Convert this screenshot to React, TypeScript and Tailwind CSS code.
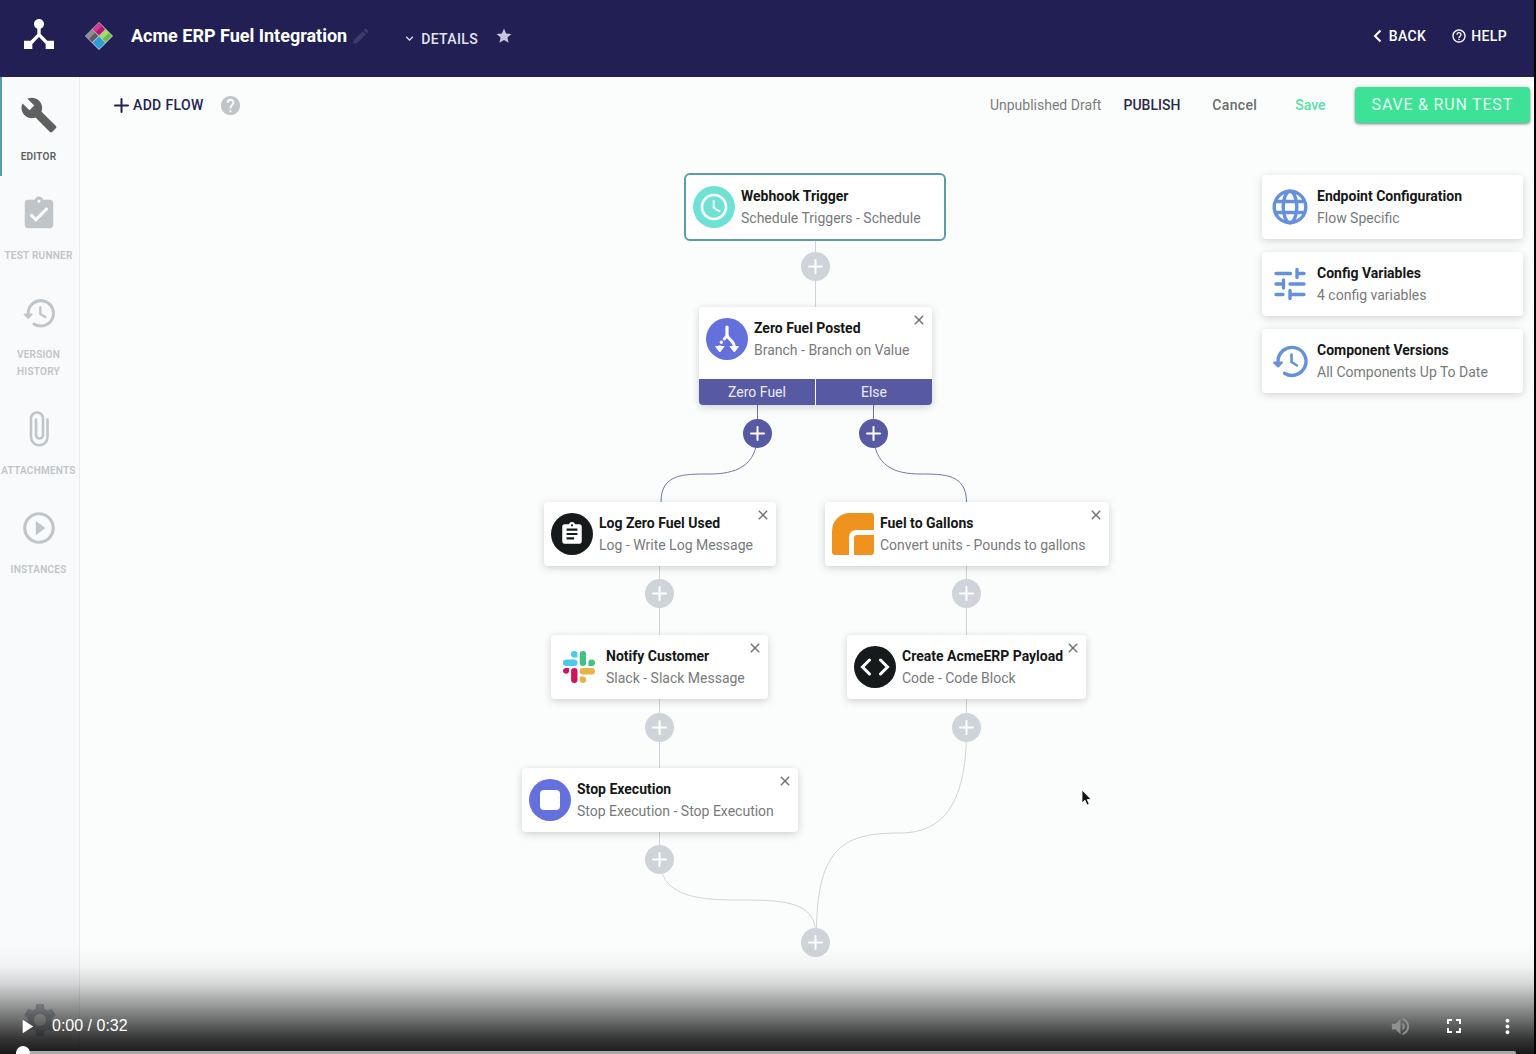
import type { ReactNode } from "react";
import {
  MdAccessTime,
  MdAssignment,
  MdAssignmentTurnedIn,
  MdBuild,
  MdDeviceHub,
  MdEdit,
  MdExpandMore,
  MdFullscreen,
  MdHelp,
  MdHelpOutline,
  MdMoreVert,
  MdPlayArrow,
  MdPlayCircleOutline,
  MdSettings,
  MdStar,
  MdVolumeUp,
} from "react-icons/md";

type Icon = (props: { className?: string }) => ReactNode;

function GlobeIcon({ className }: { className?: string }) {
  return (
    <svg viewBox="0 0 42 42" className={className} fill="none" stroke="currentColor" strokeWidth="3.4" aria-hidden="true">
      <circle cx="21" cy="21" r="15.8" />
      <ellipse cx="21" cy="21" rx="6.8" ry="15.8" />
      <path d="M6 15.500h30M6 26.500h30" />
    </svg>
  );
}

function SlidersIcon({ className }: { className?: string }) {
  return (
    <svg
      viewBox="0 0 42 42"
      className={className}
      fill="none"
      stroke="currentColor"
      strokeWidth="3.4"
      strokeLinecap="round"
      aria-hidden="true"
    >
      <path d="M7 10.500h14.500M28 10.500h7M28 6.500v8M7 21h7M14.500 17v8M21 21h14M7 31.500h7M21 31.500h14M21 27.500v8" />
    </svg>
  );
}

function HistoryIcon({ className }: { className?: string }) {
  return (
    <svg
      viewBox="0 0 42 42"
      className={className}
      fill="none"
      stroke="currentColor"
      strokeWidth="3.4"
      strokeLinecap="round"
      strokeLinejoin="round"
      aria-hidden="true"
    >
      <path d="M9 21.500A14 14 0 1 1 15.500 33.200" />
      <path d="M5 22.500h8L9 26.500z" fill="currentColor" strokeWidth="2" />
      <path d="M22.500 14.500v7.500l5.500 3.500" strokeWidth="2.6" />
    </svg>
  );
}

function ClipIcon({ className }: { className?: string }) {
  return (
    <svg
      viewBox="0 0 38 38"
      className={className}
      fill="none"
      stroke="currentColor"
      strokeWidth="2.600"
      strokeLinecap="round"
      aria-hidden="true"
    >
      <path d="M27.500 9.500V27a8 8 0 0 1-16.500 0V8.500a6 6 0 0 1 12 0V25a3.500 3.500 0 0 1-7 0V9.500" />
    </svg>
  );
}

function PlusIcon({ className }: { className?: string }) {
  return (
    <svg viewBox="0 0 15 15" className={className} stroke="currentColor" strokeWidth="2" strokeLinecap="round" aria-hidden="true">
      <path d="M7.500 1v13M1 7.500h13" />
    </svg>
  );
}

function CrossIcon() {
  return (
    <svg viewBox="0 0 10 10" className="size-[10px]" stroke="currentColor" strokeWidth="1.4" aria-hidden="true">
      <path d="M.8.8l8.400 8.400M9.200.8.8 9.200" />
    </svg>
  );
}

const sideItems: { label: string; icon: Icon; active?: boolean }[] = [
  { label: "Editor", icon: MdBuild, active: true },
  { label: "Test Runner", icon: MdAssignmentTurnedIn },
  { label: "Version History", icon: HistoryIcon },
  { label: "Attachments", icon: ClipIcon },
  { label: "Instances", icon: MdPlayCircleOutline },
];

const configCards: { title: string; detail: string; icon: Icon }[] = [
  { title: "Endpoint Configuration", detail: "Flow Specific", icon: GlobeIcon },
  { title: "Config Variables", detail: "4 config variables", icon: SlidersIcon },
  { title: "Component Versions", detail: "All Components Up To Date", icon: HistoryIcon },
];

// Canvas positions of the "add step" buttons
const addButtons = [
  { place: "left-[721px] top-[119px]", color: "bg-[#ced4d9]" },
  { place: "left-[663px] top-[286px]", color: "bg-[#575aa3]" },
  { place: "left-[779px] top-[286px]", color: "bg-[#575aa3]" },
  { place: "left-[565px] top-[446px]", color: "bg-[#ced4d9]" },
  { place: "left-[872px] top-[446px]", color: "bg-[#ced4d9]" },
  { place: "left-[565px] top-[580px]", color: "bg-[#ced4d9]" },
  { place: "left-[872px] top-[580px]", color: "bg-[#ced4d9]" },
  { place: "left-[565px] top-[712px]", color: "bg-[#ced4d9]" },
  { place: "left-[721px] top-[795px]", color: "bg-[#ced4d9]" },
];

function ProductLogo() {
  return (
    <svg viewBox="0 0 28 28" className="size-7" aria-hidden="true">
      <path d="M14 0 28 14 14 28 0 14z" fill="#cfc9dc" />
      <path d="M14 1 20.200 7.200 14 13.400 7.800 7.200z" fill="#b8156f" />
      <path d="M7.200 7.800 13.400 14 7.200 20.200 1 14z" fill="#5d5c64" />
      <path d="M20.800 7.800 27 14 20.800 20.200 14.600 14z" fill="#6cbd45" />
      <path d="M14 14.600 20.200 20.800 14 27 7.800 20.800z" fill="#2a9fd6" />
      <path d="M14 1 17 4 10.800 10.200 7.800 7.200z" fill="#d03a92" />
      <path d="M20.800 7.800 23.800 10.800 17.600 17 14.600 14z" fill="#a5dc6c" />
      <path d="M7.200 7.800 10.200 10.800 4 17 1 14z" fill="#8e8d94" />
    </svg>
  );
}

function SlackLogo() {
  return (
    <svg viewBox="0 0 32 32" className="size-8" aria-hidden="true">
      <g fill="#4cc8ea">
        <rect x="0" y="8.5" width="14.5" height="6.4" rx="3.2" />
        <path d="M11.3 0a3.2 3.2 0 0 1 3.2 3.2v3.3h-3.2a3.2 3.2 0 0 1 0-6.5z" />
      </g>
      <g fill="#43c083">
        <rect x="16.7" y="0" width="6.4" height="14.9" rx="3.2" />
        <path d="M32 11.7a3.2 3.2 0 0 1-3.2 3.2h-3.4v-3.2a3.3 3.3 0 0 1 6.6 0z" />
      </g>
      <g fill="#e9b346">
        <rect x="16.7" y="17.1" width="15.3" height="6.4" rx="3.2" />
        <path d="M19.9 32a3.2 3.2 0 0 1-3.2-3.2v-3.3h3.2a3.2 3.2 0 0 1 0 6.5z" />
      </g>
      <g fill="#cf1459">
        <rect x="8.1" y="17.1" width="6.4" height="14.9" rx="3.2" />
        <path d="M0 20.3a3.2 3.2 0 0 1 3.2-3.2h2.9v3.2a3.1 3.1 0 0 1-6.1 0z" />
      </g>
    </svg>
  );
}

function UnitsLogo() {
  return (
    <svg viewBox="0 0 42 42" className="size-[42px]" aria-hidden="true" fill="#f0931e">
      <path d="M18 0h21a3 3 0 0 1 3 3v14H24a7 7 0 0 0-7 7v18H3a3 3 0 0 1-3-3V18A18 18 0 0 1 18 0z" />
      <path d="M25 22h17v17a3 3 0 0 1-3 3H22V25a3 3 0 0 1 3-3z" />
    </svg>
  );
}

function BranchIcon() {
  return (
    <svg viewBox="0 0 42 42" className="size-[42px]" aria-hidden="true" fill="none" stroke="#fff">
      <path d="M21 9v9" strokeWidth="3.2" strokeLinecap="round" />
      <path d="M21 17c1 5 7.500 5 7.500 13" strokeWidth="3" />
      <path d="M20.500 18.500l-2.300 2.500" strokeWidth="2.800" strokeLinecap="round" />
      <circle cx="15.300" cy="24.200" r="1.300" fill="#fff" strokeWidth="0.8" />
      <path d="M13.700 27.500v2" strokeWidth="2.800" />
      <path d="M9.500 28.500h8.500l-4.200 5.500zM24 28.500h8.500L28.300 34z" fill="#fff" strokeWidth="1" strokeLinejoin="round" />
    </svg>
  );
}

function Disc({ color, children }: { color: string; children?: ReactNode }) {
  return (
    <span className={`flex size-[42px] items-center justify-center rounded-full text-white ${color}`}>
      {children}
    </span>
  );
}

function CardBody({ icon, title, detail }: { icon: ReactNode; title: string; detail: string }) {
  return (
    <div className="flex h-16 items-center gap-[6px] pl-[7px]">
      <span className="flex w-[42px] shrink-0 justify-center">{icon}</span>
      <div className="whitespace-nowrap text-sm leading-[22px]">
        <h3 className="font-bold text-[#151717]">{title}</h3>
        <p className="text-[#777a7b]">{detail}</p>
      </div>
    </div>
  );
}

type StepProps = {
  place: string;
  icon: ReactNode;
  title: string;
  detail: string;
  children?: ReactNode;
};

function Step({ place, icon, title, detail, children }: StepProps) {
  return (
    <article className={`absolute rounded-sm bg-white shadow-[0_2px_8px_rgba(0,0,0,0.18)] ${place}`}>
      <CardBody icon={icon} title={title} detail={detail} />
      <button
        type="button"
        aria-label={`Remove ${title}`}
        className="absolute right-[8px] top-[8px] text-[#6d7173]"
      >
        <CrossIcon />
      </button>
      {children}
    </article>
  );
}

function Connectors() {
  return (
    <svg className="absolute left-0 top-0 h-[840px] w-[1100px]" fill="none" aria-hidden="true">
      <g stroke="#cfd4d6">
        <path d="M735.500 107v70" />
        <path d="M579.500 433v70M886.500 433v70M579.500 566v70M579.500 699v30" />
        <path d="M886.500 566v30C886.500 660 870 700 820 700C766 700 736.500 712 736.500 800" />
        <path d="M580 726C580 760 610 767 655 767C700 767 735.500 767 735.500 800" />
      </g>
      <g stroke="#7476a6">
        <path d="M677.500 272v28C677.500 334 655 341 629 341C603 341 581 341 581 369" />
        <path d="M793.500 272v28C793.500 334 816 341 840 341C864 341 886.500 341 886.500 369" />
      </g>
    </svg>
  );
}

function Header() {
  return (
    <header className="flex h-[77px] items-center bg-[#211f53] pb-[6px] text-white">
      <a href="#home" aria-label="Home" className="flex w-[78px] justify-center">
        <MdDeviceHub className="mb-1 size-10" />
      </a>
      <div className="ml-[7px] flex items-center">
        <ProductLogo />
        <h1 className="ml-[18px] text-lg font-bold">Acme ERP Fuel Integration</h1>
        <button type="button" aria-label="Rename" className="ml-1 text-[#3e3b66]">
          <MdEdit className="size-5" />
        </button>
        <button type="button" className="ml-[31px] mt-[6px] flex items-center gap-1 text-sm font-medium tracking-wide text-[#e4e3ee]">
          <MdExpandMore className="size-[15px]" />
          DETAILS
        </button>
        <button type="button" aria-label="Favorite" className="ml-[17px] text-[#c7c6de]">
          <MdStar className="size-[18px]" />
        </button>
      </div>
      <nav className="ml-auto mr-[27px] flex items-center gap-[25px] text-sm font-medium tracking-wide">
        <a href="#back" className="flex items-center gap-[7px]">
          <svg viewBox="0 0 9 14" className="h-[14px] w-[9px]" fill="none" stroke="#fff" strokeWidth="2" aria-hidden="true">
            <path d="M7.500 1.500 2 7l5.500 5.500" />
          </svg>
          BACK
        </a>
        <a href="#help" className="flex items-center gap-1">
          <MdHelpOutline className="size-4" />
          HELP
        </a>
      </nav>
    </header>
  );
}

function Sidebar() {
  return (
    <nav className="flex w-20 shrink-0 flex-col border-r border-[#e9ecee] bg-[#f9fafb]">
      {sideItems.map(({ label, icon: ItemIcon, active }) => (
        <a
          key={label}
          href={`#${label.toLowerCase().replace(" ", "-")}`}
          className={`flex flex-col items-center border-l-2 pb-[11px] pr-1 pt-[19px] ${
            active ? "border-[#5f9cab] text-[#5f6161]" : "border-transparent text-[#bfc5c9]"
          }`}
        >
          <ItemIcon className="size-[38px]" />
          <span
            className={`mt-[14px] w-min text-center text-[10px] font-semibold uppercase leading-[17px] tracking-wide ${
              label === "Test Runner" ? "whitespace-nowrap" : ""
            }`}
          >
            {label}
          </span>
        </a>
      ))}
      <button type="button" aria-label="Settings" className="mb-[14px] mt-auto flex justify-center text-[#bfc5c9]">
        <MdSettings className="size-10" />
      </button>
    </nav>
  );
}

function Toolbar() {
  return (
    <div className="flex h-14 items-center pl-[34px] pr-1 text-sm">
      <button type="button" className="flex items-center gap-1 font-medium tracking-wide text-[#23214f]">
        <PlusIcon className="size-[15px]" />
        ADD FLOW
      </button>
      <button type="button" aria-label="About flows" className="ml-[15px] text-[#c1c5c9]">
        <MdHelp className="size-[23px]" />
      </button>
      <div className="ml-auto flex items-center">
        <span className="text-[#7b7e80]">Unpublished Draft</span>
        <button type="button" className="ml-[22px] font-medium text-[#2a2947]">PUBLISH</button>
        <button type="button" className="ml-[32px] font-medium tracking-wide text-[#6a6d6d]">Cancel</button>
        <button type="button" className="ml-[38px] font-medium text-[#57e0a7]">Save</button>
        <button
          type="button"
          className="ml-[29px] h-9 rounded-sm bg-[#3de296] px-[17px] text-base tracking-wider text-[#e2fff1] shadow-[0_1px_3px_rgba(0,0,0,0.5)]"
        >
          SAVE &amp; RUN TEST
        </button>
      </div>
    </div>
  );
}

function ConfigPanel() {
  return (
    <aside className="ml-auto mr-[11px] mt-[42px] flex w-[261px] flex-col gap-[13px]">
      {configCards.map(({ title, detail, icon: CardIcon }) => (
        <section key={title} className="rounded-sm bg-white shadow-[0_2px_8px_rgba(0,0,0,0.16)]">
          <CardBody icon={<CardIcon className="size-[42px] text-[#6490dc]" />} title={title} detail={detail} />
        </section>
      ))}
    </aside>
  );
}

function FlowCanvas() {
  return (
    <div className="relative flex-1">
      <Connectors />
      <article className="absolute left-[604px] top-[40px] w-[262px] rounded-md border-2 border-[#5b9ca8] bg-white">
        <CardBody
          icon={
            <Disc color="bg-[#70e2d5]">
              <MdAccessTime className="size-[32px]" />
            </Disc>
          }
          title="Webhook Trigger"
          detail="Schedule Triggers - Schedule"
        />
      </article>
      <Step
        place="left-[619px] top-[174px] w-[233px]"
        icon={
          <Disc color="bg-[#6470dc]">
            <BranchIcon />
          </Disc>
        }
        title="Zero Fuel Posted"
        detail="Branch - Branch on Value"
      >
        <div className="mt-2 grid grid-cols-2 gap-px overflow-hidden rounded-b-sm text-center text-sm leading-[26px] text-[#ecebf8]">
          <span className="bg-[#575aa3]">Zero Fuel</span>
          <span className="bg-[#575aa3]">Else</span>
        </div>
      </Step>
      <Step
        place="left-[464px] top-[369px] w-[232px]"
        icon={
          <Disc color="bg-[#161a1a]">
            <MdAssignment className="size-[26px]" />
          </Disc>
        }
        title="Log Zero Fuel Used"
        detail="Log - Write Log Message"
      />
      <Step
        place="left-[745px] top-[369px] w-[284px]"
        icon={<UnitsLogo />}
        title="Fuel to Gallons"
        detail="Convert units - Pounds to gallons"
      />
      <Step
        place="left-[471px] top-[502px] w-[217px]"
        icon={<SlackLogo />}
        title="Notify Customer"
        detail="Slack - Slack Message"
      />
      <Step
        place="left-[767px] top-[502px] w-[239px]"
        icon={
          <Disc color="bg-[#161a1a]">
            <svg
              viewBox="0 0 30 18"
              className="h-[18px] w-[30px]"
              fill="none"
              stroke="currentColor"
              strokeWidth="3"
              strokeLinecap="round"
              aria-hidden="true"
            >
              <path d="M9.500 2 2.500 9l7 7M20.500 2l7 7-7 7" />
            </svg>
          </Disc>
        }
        title="Create AcmeERP Payload"
        detail="Code - Code Block"
      />
      <Step
        place="left-[442px] top-[635px] w-[276px]"
        icon={
          <Disc color="bg-[#6470dc]">
            <span className="size-5 rounded-sm bg-white" />
          </Disc>
        }
        title="Stop Execution"
        detail="Stop Execution - Stop Execution"
      />
      {addButtons.map(({ place, color }) => (
        <button
          key={place}
          type="button"
          aria-label="Add step"
          className={`absolute flex size-[29px] items-center justify-center rounded-full text-white ${place} ${color}`}
        >
          <PlusIcon className="size-[15px]" />
        </button>
      ))}
      <svg
        viewBox="0 0 12 18"
        className="absolute left-[1001px] top-[656px] h-[18px] w-3"
        stroke="#fff"
        strokeWidth="0.8"
        aria-hidden="true"
      >
        <path d="M1 1v13l3-2.800L6 16l2.200-1-2-4.500h4z" fill="#111" />
      </svg>
      <ConfigPanel />
    </div>
  );
}

function PlayerControls() {
  return (
    <div className="absolute inset-x-0 bottom-0 flex h-[110px] flex-col justify-end bg-[linear-gradient(180deg,transparent_0%,rgba(0,0,0,0.03)_20%,rgba(0,0,0,0.15)_36%,rgba(0,0,0,0.35)_52%,rgba(0,0,0,0.58)_70%,rgba(0,0,0,0.79)_86%,rgba(0,0,0,0.9)_100%)] text-white">
      <div className="flex h-12 items-center pl-[15px] pr-[15px]">
        <button type="button" aria-label="Play">
          <MdPlayArrow className="size-[23px]" />
        </button>
        <span className="ml-[14px] font-['Liberation_Sans',Arial,sans-serif] text-base">0:00 / 0:32</span>
        <div className="ml-auto flex items-center gap-[30px]">
          <button type="button" aria-label="Volume" className="text-[#8f8f8f]">
            <MdVolumeUp className="size-[23px]" />
          </button>
          <button type="button" aria-label="Full screen">
            <MdFullscreen className="size-6" />
          </button>
          <button type="button" aria-label="More options">
            <MdMoreVert className="size-[23px]" />
          </button>
        </div>
      </div>
      <input
        type="range"
        aria-label="Seek"
        min={0}
        max={32}
        defaultValue={0}
        className="-mb-px ml-4 mr-[18px] mt-px h-1 appearance-none rounded-full bg-[#a9a9a9] [&::-webkit-slider-thumb]:size-[14px] [&::-webkit-slider-thumb]:appearance-none [&::-webkit-slider-thumb]:rounded-full [&::-webkit-slider-thumb]:bg-white"
      />
    </div>
  );
}

export default function App() {
  return (
    <div className="relative flex min-h-screen flex-col overflow-hidden border-r-2 border-black bg-[#fbfdfd] font-[Roboto,sans-serif]">
      <Header />
      <div className="flex flex-1">
        <Sidebar />
        <main className="flex min-w-0 flex-1 flex-col">
          <Toolbar />
          <FlowCanvas />
        </main>
      </div>
      <PlayerControls />
    </div>
  );
}
